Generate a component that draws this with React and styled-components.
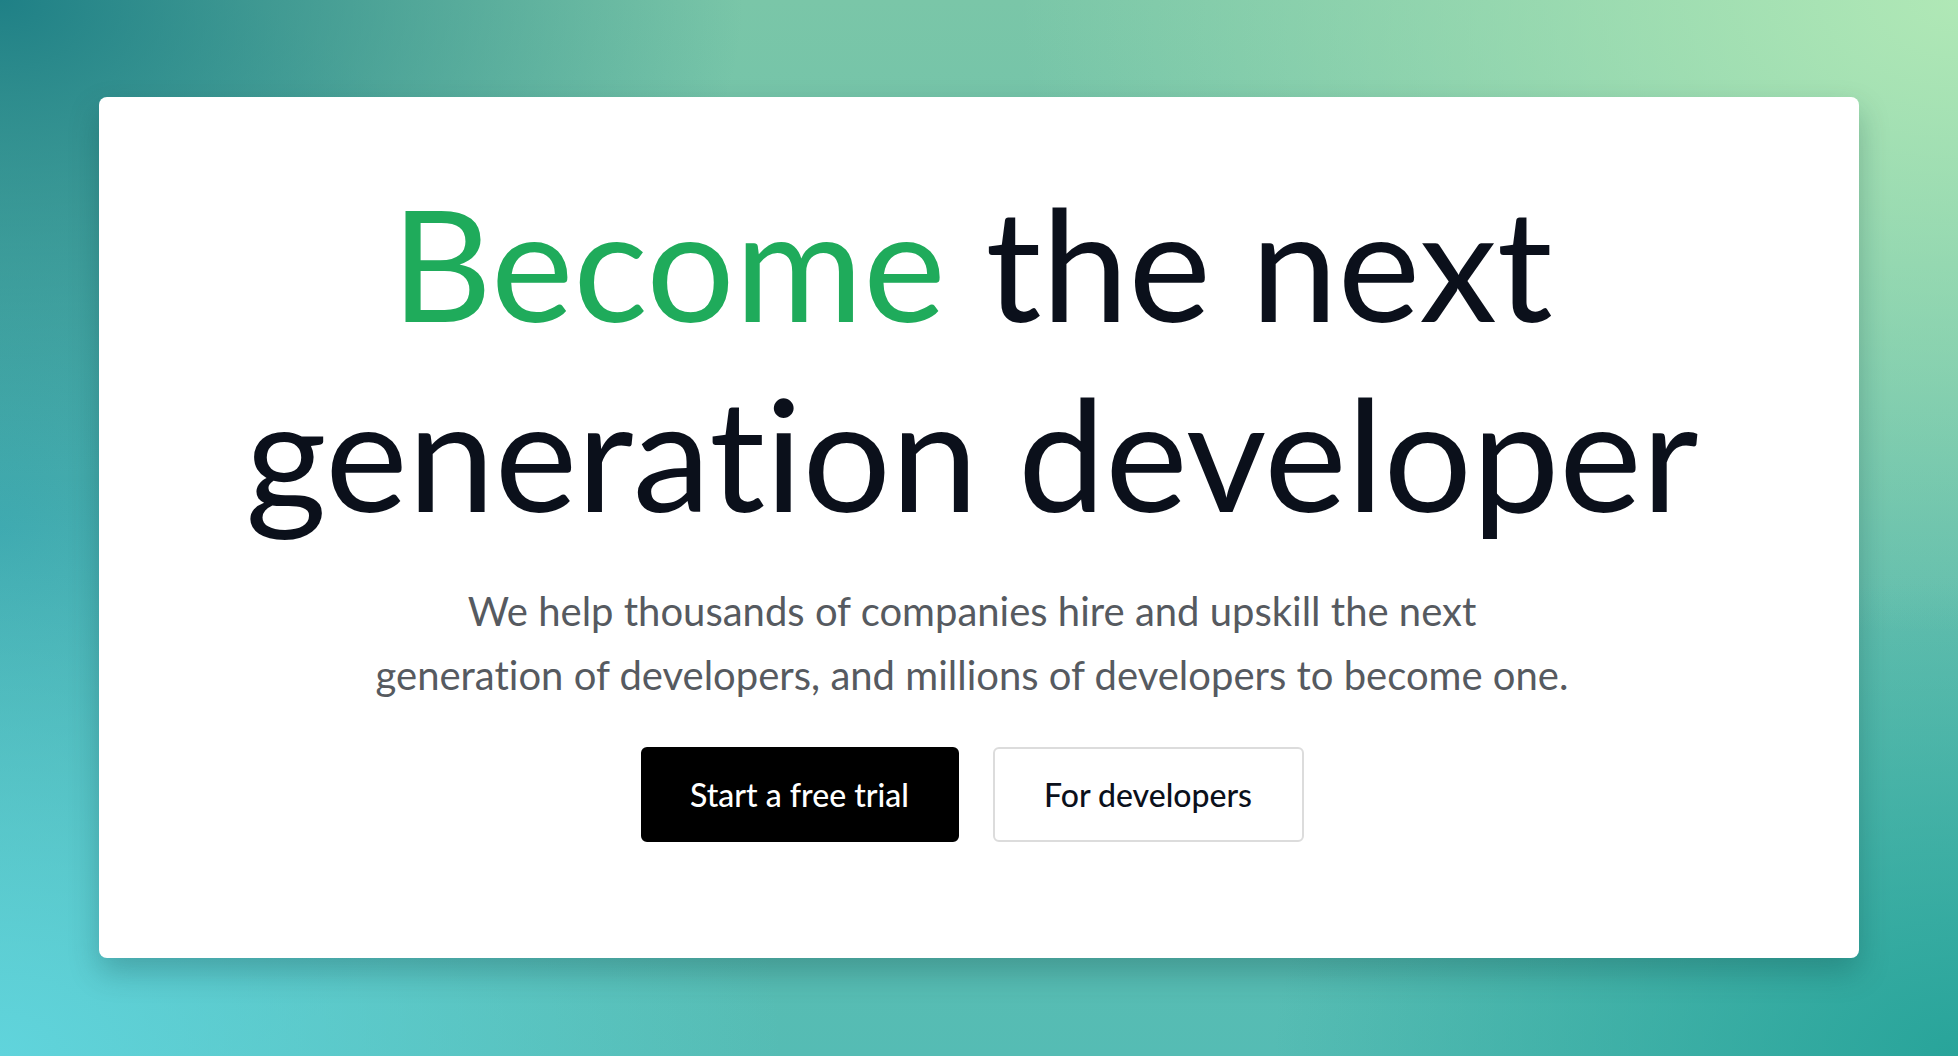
import React from 'react';
import styled, { createGlobalStyle } from 'styled-components';

const GlobalStyle = createGlobalStyle`
    html, body {
        margin: 0;
        padding: 0;
    }
    body {
        font-family: Lato, 'Liberation Sans', sans-serif;
        -webkit-font-smoothing: antialiased;
    }
`;

const Page = styled.div`
    box-sizing: border-box;
    display: flex;
    align-items: center;
    justify-content: center;
    width: 100%;
    height: 100vh;
    padding: 97px 99px 98px;
    background:
        radial-gradient(ellipse 38% 45% at 0% 0%, rgba(31, 128, 134, 1) 0%, rgba(31, 128, 134, 0) 100%),
        radial-gradient(ellipse 48% 60% at 100% 0%, rgba(176, 232, 182, 1) 0%, rgba(176, 232, 182, 0) 100%),
        radial-gradient(ellipse 40% 55% at 0% 100%, rgba(96, 212, 220, 1) 0%, rgba(96, 212, 220, 0) 100%),
        radial-gradient(ellipse 35% 45% at 100% 100%, rgba(40, 164, 154, 1) 0%, rgba(40, 164, 154, 0) 100%),
        radial-gradient(ellipse 30% 55% at 0% 50%, rgba(60, 166, 172, 1) 0%, rgba(60, 166, 172, 0) 100%),
        linear-gradient(to bottom, #7ac6a8 0%, #64beac 50%, #55bcb4 100%);
`;

const Card = styled.main`
    box-sizing: border-box;
    display: flex;
    flex-direction: column;
    align-items: center;
    width: 100%;
    height: 100%;
    padding: 70px 14px 0 0;
    border-radius: 8px;
    background-color: #ffffff;
    box-shadow: 0 14px 30px 0 rgba(10, 60, 60, 0.28);
`;

const Headline = styled.h1`
    margin: 0;
    font-family: Lato, 'Liberation Sans', sans-serif;
    font-size: 156px;
    font-weight: 400;
    line-height: 190px;
    font-variant-ligatures: none;
    text-align: center;
    color: #0b101b;
`;

const Accent = styled.span`
    color: #1fab5b;
`;

const Lead = styled.p`
    margin: 32px 0 0;
    font-family: Lato, 'Liberation Sans', sans-serif;
    font-size: 40px;
    font-weight: 400;
    line-height: 64px;
    font-variant-ligatures: none;
    text-align: center;
    color: #565a60;
`;

const Actions = styled.div`
    display: flex;
    gap: 34px;
    margin-top: 40px;
`;

const Button = styled.button`
    box-sizing: border-box;
    height: 95px;
    width: ${props => props.$width}px;
    border: 2px solid ${props => props.$primary ? '#000000' : '#dcdcdc'};
    border-radius: 6px;
    background-color: ${props => props.$primary ? '#000000' : '#ffffff'};
    color: ${props => props.$primary ? '#ffffff' : '#0b101b'};
    font-family: Lato, 'Liberation Sans', sans-serif;
    font-size: 32px;
    font-weight: 500;
    cursor: pointer;
`;

export default function App() {
    return (
        <>
            <GlobalStyle />
            <Page>
                <Card>
                    <Headline>
                        <Accent>Become</Accent> the next
                        <br />
                        generation developer
                    </Headline>
                    <Lead>
                        We help thousands of companies hire and upskill the next
                        <br />
                        generation of developers, and millions of developers to become one.
                    </Lead>
                    <Actions>
                        <Button $primary $width={318}>Start a free trial</Button>
                        <Button $width={311}>For developers</Button>
                    </Actions>
                </Card>
            </Page>
        </>
    );
}
